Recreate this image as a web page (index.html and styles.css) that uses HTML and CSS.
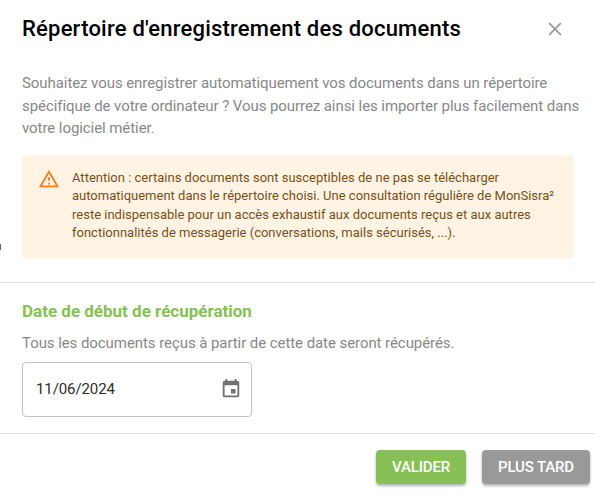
FILE: index.html
```html
<!DOCTYPE html>
<html lang="fr">
<head>
  <meta charset="utf-8">
  <title>Répertoire d'enregistrement des documents</title>
  <link rel="stylesheet" href="styles.css">
</head>
<body>
  <div class="dialog">
    <header class="dialog-header">
      <h1>Répertoire d'enregistrement des documents</h1>
      <button class="close-btn" aria-label="Fermer">
        <svg width="14" height="14" viewBox="0 0 14 14">
          <path d="M1.2 1.2L12.8 12.8M12.8 1.2L1.2 12.8"/>
        </svg>
      </button>
    </header>

    <section class="intro">
      <p class="text">Souhaitez vous enregistrer automatiquement vos documents dans un répertoire<br>
        spécifique de votre ordinateur ? Vous pourrez ainsi les importer plus facilement dans<br>
        votre logiciel métier.</p>
      <div class="alert">
        <svg class="alert-icon" width="22" height="22" viewBox="0 0 24 24">
          <path d="M12 5.99L19.53 19H4.47L12 5.99M12 2L1 21h22L12 2zm1 14h-2v2h2v-2zm0-6h-2v4h2v-4z"/>
        </svg>
        <p class="alert-text">Attention : certains documents sont susceptibles de ne pas se télécharger<br>
          automatiquement dans le répertoire choisi. Une consultation régulière de MonSisra²<br>
          reste indispensable pour un accès exhaustif aux documents reçus et aux autres<br>
          fonctionnalités de messagerie (conversations, mails sécurisés, ...).</p>
      </div>
    </section>

    <section class="date-section">
      <h2>Date de début de récupération</h2>
      <p class="text">Tous les documents reçus à partir de cette date seront récupérés.</p>
      <div class="date-field">
        <span class="date-value">11/06/2024</span>
        <svg width="22" height="22" viewBox="0 0 24 24">
          <path d="M17 12h-5v5h5v-5zM16 1v2H8V1H6v2H5c-1.11 0-1.99.9-1.99 2L3 19c0 1.1.89 2 2 2h14c1.1 0 2-.9 2-2V5c0-1.1-.9-2-2-2h-1V1h-2zm3 18H5V8h14v11z"/>
        </svg>
      </div>
    </section>

    <footer class="actions">
      <button class="btn btn-primary">VALIDER</button>
      <button class="btn btn-secondary">PLUS TARD</button>
    </footer>
  </div>
  <span class="page-edge"></span>
</body>
</html>
```

FILE: styles.css
```css
* {
  box-sizing: border-box;
}
body {
  margin: 0;
  width: 595px;
  height: 495px;
  overflow: hidden;
  background-color: #fff;
  font-family: Roboto, "Liberation Sans", sans-serif;
}
h1, h2, p {
  margin: 0;
  white-space: nowrap;
}
.dialog {
  display: flex;
  flex-direction: column;
  height: 495px;
}
.dialog-header {
  display: flex;
  justify-content: space-between;
  align-items: center;
  height: 57px;
  padding: 0 33px 0 22px;
}
h1 {
  font-size: 22px;
  font-weight: 500;
  line-height: 30px;
  letter-spacing: 0.21px;
  color: #000;
}
.close-btn {
  display: flex;
  padding: 0;
  border: none;
  background: none;
  cursor: pointer;
}
.close-btn svg {
  fill: none;
  stroke: #999;
  stroke-width: 1.7;
}
.intro {
  height: 226px;
  padding: 15px 21px 0 22px;
  border-bottom: 1px solid #e0e0e0;
}
.text {
  font-size: 15px;
  line-height: 22.5px;
  letter-spacing: -0.07px;
  color: #888;
}
.alert {
  display: flex;
  gap: 12px;
  height: 103px;
  margin-top: 15px;
  padding: 13px 16px;
  border-radius: 4px;
  background-color: #fff4e3;
}
.alert-icon {
  flex: none;
  fill: #f57f20;
}
.alert-text {
  padding-top: 1px;
  font-size: 13px;
  line-height: 18.6px;
  color: #7a4f14;
}
.date-section {
  height: 151px;
  padding: 16px 22px 0;
  border-bottom: 1px solid #e0e0e0;
}
h2 {
  margin-bottom: 9px;
  font-size: 17px;
  font-weight: 700;
  line-height: 24px;
  color: #86c057;
}
.date-field {
  display: flex;
  justify-content: space-between;
  align-items: center;
  width: 230px;
  height: 55px;
  margin-top: 7px;
  padding: 0 9px 0 13px;
  border: 1px solid #c1c1c1;
  border-radius: 4px;
}
.date-field svg {
  fill: #717171;
}
.date-value {
  font-size: 15px;
  letter-spacing: -0.1px;
  color: #2c2c2c;
}
.actions {
  display: flex;
  justify-content: flex-end;
  gap: 16px;
  padding: 16px 5px 0;
}
.btn {
  height: 34px;
  padding: 0;
  border: none;
  border-radius: 4px;
  color: #fff;
  font-family: inherit;
  font-size: 15px;
  font-weight: 500;
  letter-spacing: -0.15px;
  box-shadow: 0 2px 3px rgba(0,0,0,0.3);
  cursor: pointer;
}
.btn-primary {
  width: 90px;
  background-color: #86c057;
}
.btn-secondary {
  width: 108px;
  background-color: #999;
}
/* sliver of the page behind the dialog */
.page-edge {
  position: absolute;
  left: 0;
  top: 244px;
  width: 1px;
  height: 6px;
  background-color: #666;
}
```
